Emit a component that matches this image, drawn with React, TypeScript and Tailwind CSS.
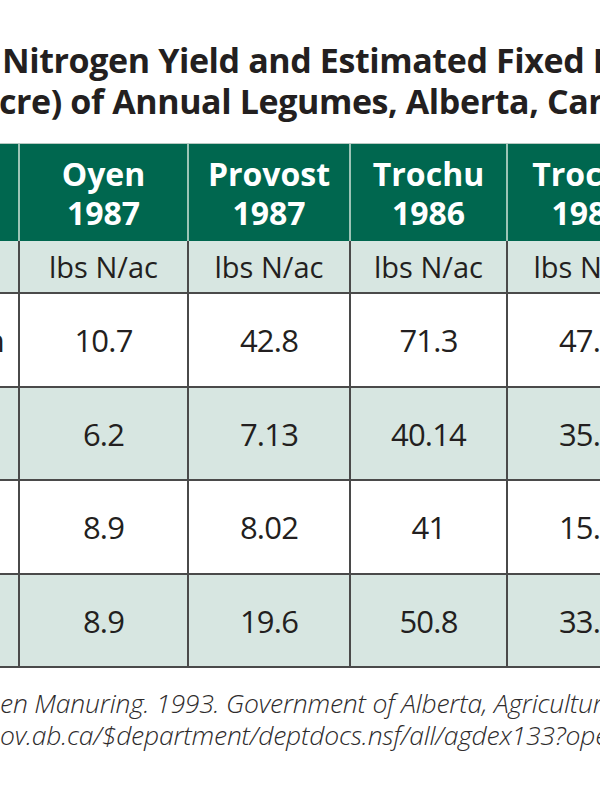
import React from "react";

const cols = ["w-[20px]", "w-[169px]", "w-[162px]", "w-[157px]", "w-[160px]"];

const sites = [
  { name: "Oyen", year: "1987" },
  { name: "Provost", year: "1987" },
  { name: "Trochu", year: "1986" },
  { name: "Trochu", year: "1987" },
];

const rows = [
  { label: "Fababean", values: ["10.7", "42.8", "71.3", "47.5"], shade: false, h: "h-[94px]" },
  { label: "", values: ["6.2", "7.13", "40.14", "35.2"], shade: true, h: "h-[93px]" },
  { label: "", values: ["8.9", "8.02", "41", "15.3"], shade: false, h: "h-[94px]" },
  { label: "", values: ["8.9", "19.6", "50.8", "33.0"], shade: true, h: "h-[93px]" },
];

export default function App() {
  return (
    <div
      className="w-[600px] h-[800px] bg-white overflow-hidden text-[#231f20]"
      style={{ fontFamily: '"Open Sans", "Noto Sans", sans-serif' }}
    >
      {/* title */}
      <div className="pt-[40px] whitespace-nowrap font-bold text-[34px] leading-[41px] tracking-[-0.4px]">
        <div className="pl-[2px]">Nitrogen Yield and Estimated Fixed Nitrogen</div>
        <div className="ml-[-1px]">cre) of Annual Legumes, Alberta, Canada</div>
      </div>

      {/* table */}
      <div className="mt-[21px] w-[668px] border-t border-[#b7c9c2]">
        <div className="flex h-[97px] bg-[#00674f] text-white font-bold text-[32px] leading-[39px]">
          <div className={`${cols[0]} shrink-0 border-r-2 border-[#9cc4b6]`} />
          {sites.map((s, i) => (
            <div
              key={i}
              className={`${cols[i + 1]} shrink-0 flex flex-col items-center justify-center ${i < 3 ? "border-r-2 border-[#9cc4b6]" : ""}`}
            >
              <span>{s.name}</span>
              <span>{s.year}</span>
            </div>
          ))}
        </div>

        <div className="flex h-[53px] bg-[#d7e6e1] border-b-2 border-[#4a4a4a] text-[29px] leading-[36px]">
          <div className={`${cols[0]} shrink-0 border-r-2 border-[#4a4a4a]`} />
          {sites.map((_, i) => (
            <div
              key={i}
              className={`${cols[i + 1]} shrink-0 flex items-center justify-center whitespace-nowrap ${i < 3 ? "border-r-2 border-[#4a4a4a]" : ""}`}
            >
              lbs N/ac
            </div>
          ))}
        </div>

        {rows.map((r, ri) => (
          <div
            key={ri}
            className={`flex ${r.h} border-b-2 border-[#4a4a4a] text-[31px] leading-[36px] tracking-[-0.8px] ${r.shade ? "bg-[#d7e6e1]" : "bg-white"}`}
          >
            <div className={`${cols[0]} shrink-0 flex items-center justify-end pr-[14px] whitespace-nowrap border-r-2 border-[#4a4a4a]`}>
              <span className="shrink-0">{r.label}</span>
            </div>
            {r.values.map((v, i) => (
              <div
                key={i}
                className={`${cols[i + 1]} shrink-0 flex items-center justify-center ${i < 3 ? "border-r-2 border-[#4a4a4a]" : ""}`}
              >
                {v}
              </div>
            ))}
          </div>
        ))}
      </div>

      {/* source note */}
      <div className="mt-[19px] whitespace-nowrap italic font-light text-[26.5px] leading-[32px] tracking-[-0.2px] text-[#2e2b2c]">
        <div>en Manuring. 1993. Government of Alberta, Agriculture and Rural Development.</div>
        <div>ov.ab.ca/$department/deptdocs.nsf/all/agdex133?opendocument</div>
      </div>
    </div>
  );
}
